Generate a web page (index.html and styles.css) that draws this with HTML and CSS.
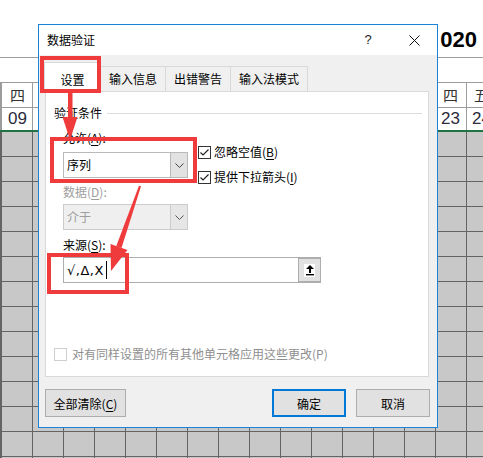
FILE: index.html
```html
<!DOCTYPE html>
<html lang="zh-CN">
<head>
  <meta charset="UTF-8" />
  <title>数据验证</title>
  <link rel="stylesheet" href="styles.css">
</head>
<body>
  <!-- worksheet behind the dialog -->
  <div class="sheet">
    <div class="sheet-head">020</div>
    <div class="sheet-row blank"></div>
    <div class="sheet-row cells">
      <span class="cell first">四</span>
      <span class="spacer"></span>
      <span class="cell">四</span>
      <span class="cell">五</span>
    </div>
    <div class="sheet-row dates">
      <span class="cell first">09</span>
      <span class="spacer"></span>
      <span class="cell">23</span>
      <span class="cell">24</span>
    </div>
    <div class="sheet-grid"></div>
  </div>

  <div class="dialog">
    <div class="dlg-title">
      <span class="dlg-name">数据验证</span>
      <span class="cap-btn help">?</span>
      <span class="cap-btn close">
        <svg width="11" height="11" viewBox="0 0 11 11"><path d="M0.5 0.5 L10.5 10.5 M10.5 0.5 L0.5 10.5" stroke="#111" stroke-width="1"/></svg>
      </span>
    </div>

    <div class="tabs">
      <span class="tab active">设置</span>
      <span class="tab">输入信息</span>
      <span class="tab">出错警告</span>
      <span class="tab">输入法模式</span>
    </div>

    <div class="panel">
      <div class="group-title"><span>验证条件</span></div>

      <div class="criteria">
        <div class="criteria-main">
          <div class="label">允许(<u>A</u>):</div>
          <div class="combo">
            <span class="combo-text">序列</span>
            <span class="combo-btn">
              <svg width="9" height="5" viewBox="0 0 9 5"><path d="M0.5 0.5 L4.5 4.5 L8.5 0.5" fill="none" stroke="#444" stroke-width="1"/></svg>
            </span>
          </div>
          <div class="label disabled">数据(<u>D</u>):</div>
          <div class="combo disabled">
            <span class="combo-text">介于</span>
            <span class="combo-btn">
              <svg width="9" height="5" viewBox="0 0 9 5"><path d="M0.5 0.5 L4.5 4.5 L8.5 0.5" fill="none" stroke="#555" stroke-width="1"/></svg>
            </span>
          </div>
        </div>

        <div class="options">
          <div class="check-row">
            <span class="check">
              <svg width="11" height="11" viewBox="0 0 11 11"><path d="M1.5 5.5 L4 8 L9.5 2.5" fill="none" stroke="#222" stroke-width="1.2"/></svg>
            </span>
            <span>忽略空值(<u>B</u>)</span>
          </div>
          <div class="check-row">
            <span class="check">
              <svg width="11" height="11" viewBox="0 0 11 11"><path d="M1.5 5.5 L4 8 L9.5 2.5" fill="none" stroke="#222" stroke-width="1.2"/></svg>
            </span>
            <span>提供下拉箭头(<u>I</u>)</span>
          </div>
        </div>
      </div>

      <div class="label source-label">来源(<u>S</u>):</div>
      <div class="source">
        <span class="source-text"><span class="values">√,Δ,X</span><i class="caret"></i></span>
        <span class="ref-btn">
          <span class="ref-icon">
            <svg width="10" height="12" viewBox="0 0 10 12"><path d="M5 1 L1 5 L4 5 L4 9 L6 9 L6 5 L9 5 Z" fill="#000"/><rect x="1" y="10" width="8" height="1.4" fill="#000"/></svg>
          </span>
        </span>
      </div>

      <div class="check-row apply-all">
        <span class="check off"></span>
        <span>对有同样设置的所有其他单元格应用这些更改(P)</span>
      </div>
    </div>

    <div class="dlg-buttons">
      <button class="btn clear">全部清除(<u>C</u>)</button>
      <button class="btn primary">确定</button>
      <button class="btn">取消</button>
    </div>
  </div>

  <!-- red annotation marks drawn over the screenshot -->
  <svg class="marks" width="483" height="458" viewBox="0 0 483 458">
    <g fill="none" stroke="#ef3b3b" stroke-width="4">
      <rect x="42" y="58" width="57" height="33"/>
      <rect x="52" y="139" width="143" height="42"/>
      <rect x="49" y="255" width="78" height="37"/>
    </g>
    <g fill="#ef3b3b">
      <rect x="68" y="92" width="4.5" height="28"/>
      <polygon points="62.5,117 77.5,117 70,140"/>
      <polygon points="139,185.7 141,186.3 121.5,248 116.2,246.3"/>
      <polygon points="110.5,244 127.5,250 111,271"/>
    </g>
  </svg>
</body>
</html>
```

FILE: styles.css
```css
* {
  box-sizing: border-box;
}

html,
body {
  margin: 0;
}

body {
  width: 483px;
  height: 458px;
  overflow: hidden;
  position: relative;
  font-family: "Noto Sans CJK SC", sans-serif;
  font-size: 12px;
  color: #000;
  background: #fff;
}

u {
  text-decoration-thickness: 1px;
  text-underline-offset: 2px;
}

/* worksheet */

.sheet {
  width: 497px;
  height: 458px;
  display: flex;
  flex-direction: column;
}

.sheet-head {
  height: 58px;
  border-bottom: 1px solid #9c9c9c;
  padding: 28px 20px 0 0;
  text-align: right;
  font: bold 22px/24px "Liberation Sans", sans-serif;
}

.sheet-row {
  display: flex;
  border-bottom: 1px solid #9c9c9c;
  background-image: repeating-linear-gradient(to right, #9c9c9c 0 1px, transparent 1px 31px);
  background-position: 1px 0;
}

.sheet-row.blank {
  height: 25px;
  background-image: none;
}

.sheet-row.cells {
  height: 25px;
  line-height: 24px;
  font-size: 15px;
  color: #333;
}

.sheet-row.dates {
  height: 24px;
  line-height: 22px;
  border-bottom: 2px solid #217346;
  font: 17px/22px "Liberation Sans", sans-serif;
  color: #2b2b3b;
}

.cell {
  width: 31px;
  text-align: center;
}

.cell.first {
  width: 32px;
  padding-left: 3px;
}

.spacer {
  flex: 1;
}

.sheet-grid {
  flex: 1;
  background-color: #c8c8c8;
  background-image:
    repeating-linear-gradient(to bottom, transparent 0 24px, #646464 24px 25px),
    repeating-linear-gradient(to right, #646464 0 1px, transparent 1px 31px);
  background-position: 0 0, 1px 0;
}

/* dialog */

.dialog {
  position: absolute;
  left: 38px;
  top: 24px;
  width: 400px;
  height: 404px;
  border: 1px solid #1883d7;
  background: #f0f0f0;
}

.dlg-title {
  height: 30px;
  display: flex;
  align-items: center;
  background: #fff;
}

.dlg-name {
  flex: 1;
  padding-left: 8px;
  line-height: 30px;
}

.cap-btn {
  width: 46px;
  height: 30px;
  display: flex;
  align-items: center;
  justify-content: center;
}

.cap-btn.help {
  font: 13px "Liberation Sans", sans-serif;
  color: #222;
  padding-bottom: 2px;
}

.tabs {
  height: 36px;
  display: flex;
  align-items: flex-end;
  padding-left: 5px;
}

.tab {
  height: 25px;
  padding: 0 8px;
  line-height: 23px;
  border-top: 1px solid #d9d9d9;
  border-right: 1px solid #d9d9d9;
  background: #f0f0f0;
}

.tab.active {
  position: relative;
  z-index: 1;
  width: 57px;
  height: 30px;
  margin-bottom: -1px;
  padding: 5px 0 0;
  text-align: center;
  border-left: 1px solid #d9d9d9;
  background: #fff;
}

.panel {
  height: 286px;
  margin: 0 8px 0 6px;
  border: 1px solid #d9d9d9;
  background: #fff;
}

.group-title {
  display: flex;
  align-items: center;
  height: 16px;
  margin-top: 13px;
  padding-left: 8px;
  line-height: 16px;
}

.group-title::after {
  content: "";
  flex: 1;
  height: 1px;
  margin: 0 6px 0 5px;
  background: #dcdcdc;
}

.criteria {
  display: flex;
  padding-left: 17px;
}

.criteria-main {
  width: 125px;
}

.label {
  height: 16px;
  margin-top: 9px;
  line-height: 16px;
}

.label.disabled {
  margin-top: 6px;
  color: #9d9d9d;
}

.combo {
  display: flex;
  height: 26px;
  margin-top: 6px;
  border: 1px solid #b9b9b9;
  background: #fff;
}

.combo.disabled {
  margin-top: 4px;
  border-color: #cccccc;
  background: #efefef;
  color: #9d9d9d;
}

.combo-text {
  flex: 1;
  padding-left: 3px;
  line-height: 24px;
}

.combo-btn {
  width: 17px;
  display: flex;
  align-items: center;
  justify-content: center;
  border-left: 1px solid #b9b9b9;
  background: #e2e2e2;
}

.combo.disabled .combo-btn {
  border-left-color: #cccccc;
  background: #e6e6e6;
}

.options {
  margin-left: 10px;
  padding-top: 23px;
}

.check-row {
  display: flex;
  align-items: center;
  height: 16px;
  line-height: 16px;
  gap: 3px;
}

.check-row + .check-row {
  margin-top: 9px;
}

.check {
  width: 13px;
  height: 13px;
  display: flex;
  align-items: center;
  justify-content: center;
  border: 1px solid #333;
  background: #fff;
}

.check.off {
  border-color: #cfcfcf;
}

.source-label {
  margin-top: 7px;
  margin-left: 17px;
}

.source {
  display: flex;
  width: 258px;
  height: 26px;
  margin: 4px 0 0 17px;
  border: 1px solid #adadad;
}

.source-text {
  flex: 1;
  display: flex;
  align-items: center;
  padding-left: 3px;
}

.values {
  font: 13px "DejaVu Sans", sans-serif;
  letter-spacing: 0.5px;
}

.caret {
  width: 1px;
  height: 18px;
  margin-left: 2px;
  background: #000;
}

.ref-btn {
  width: 22px;
  display: flex;
  align-items: center;
  justify-content: center;
  border: 1px solid #adadad;
  border-right: 0;
  background: #e1e1e1;
}

.ref-icon {
  width: 11px;
  height: 13px;
  display: flex;
  align-items: center;
  justify-content: center;
  background: #fff;
}

.apply-all {
  margin-top: 63px;
  padding-left: 8px;
  color: #8f8f8f;
  gap: 5px;
}

.dlg-buttons {
  display: flex;
  gap: 10px;
  margin-top: 12px;
  padding: 0 7px 0 6px;
}

.btn {
  width: 74px;
  height: 28px;
  padding: 0;
  border: 1px solid #adadad;
  background: #e1e1e1;
  font: inherit;
  color: #000;
}

.btn.clear {
  width: 81px;
  margin-right: auto;
}

.btn.primary {
  border: 2px solid #0078d7;
}

.marks {
  position: absolute;
  left: 0;
  top: 0;
  z-index: 2;
  pointer-events: none;
}
```
